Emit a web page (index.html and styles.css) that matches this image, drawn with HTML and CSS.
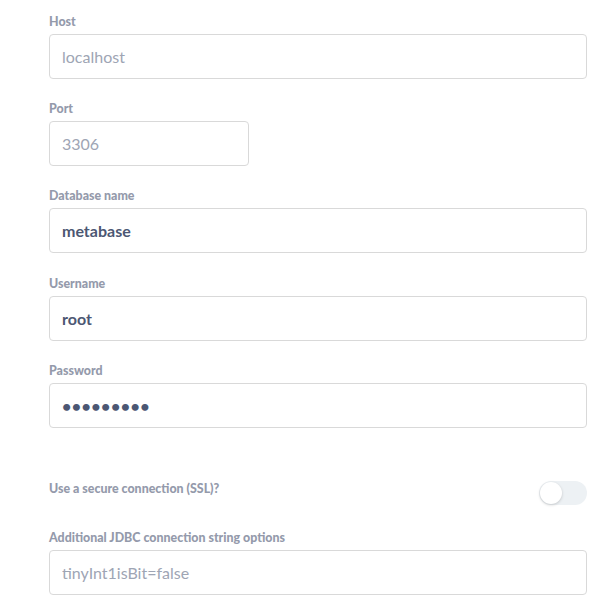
FILE: index.html
```html
<!DOCTYPE html>
<html>
<head>
<meta charset="utf-8">
<link rel="stylesheet" href="styles.css">
</head>
<body>
<form class="form">
  <div class="field">
    <label class="label">Host</label>
    <input class="input" type="text" placeholder="localhost">
  </div>
  <div class="field">
    <label class="label">Port</label>
    <input class="input input-short" type="text" placeholder="3306">
  </div>
  <div class="field">
    <label class="label">Database name</label>
    <input class="input" type="text" value="metabase">
  </div>
  <div class="field">
    <label class="label">Username</label>
    <input class="input" type="text" value="root">
  </div>
  <div class="field">
    <label class="label">Password</label>
    <input class="input input-password" type="password" value="metabase1">
  </div>
  <div class="toggle-row">
    <label class="label">Use a secure connection (SSL)?</label>
    <span class="toggle"><span class="knob"></span></span>
  </div>
  <div class="field">
    <label class="label">Additional JDBC connection string options</label>
    <input class="input" type="text" placeholder="tinyInt1isBit=false">
  </div>
</form>
</body>
</html>
```
FILE: styles.css
```css
html, body {
  margin: 0;
  padding: 0;
  background: #ffffff;
}
body {
  font-family: Lato, "Open Sans", sans-serif;
}
.form {
  width: 538px;
  padding: 12px 0 0 49px;
  display: flex;
  flex-direction: column;
}
.field {
  display: flex;
  flex-direction: column;
  margin-bottom: 20.2px;
}
.label {
  display: block;
  font-size: 12.4px;
  line-height: 16px;
  font-weight: 900;
  color: #949aab;
  padding-top: 2px;
  margin-bottom: 4px;
}
.input {
  box-sizing: border-box;
  width: 538px;
  height: 45px;
  margin: 0;
  padding: 0 12px;
  border: 1px solid #d9d9d9;
  border-radius: 4px;
  background: #ffffff;
  font-family: Lato, "Open Sans", sans-serif;
  font-size: 16px;
  font-weight: 700;
  color: #4c5773;
  outline: none;
}
.input::placeholder {
  font-weight: 400;
  color: #9ea5b4;
}
.input-password {
  letter-spacing: 0.5px;
}
.input-short {
  width: 200px;
}
.toggle-row {
  display: flex;
  justify-content: space-between;
  align-items: flex-start;
  margin-top: 33px;
  margin-bottom: 23px;
}
.toggle-row .label {
  padding-top: 0;
  margin: 0;
}
.toggle {
  position: relative;
  display: block;
  width: 48px;
  height: 24px;
  border-radius: 12px;
  background: #edf1f4;
}
.knob {
  position: absolute;
  left: 1px;
  top: 1px;
  width: 22px;
  height: 22px;
  border-radius: 50%;
  background: #ffffff;
  box-shadow: 0 1px 3px rgba(0, 0, 0, 0.18);
}
```
